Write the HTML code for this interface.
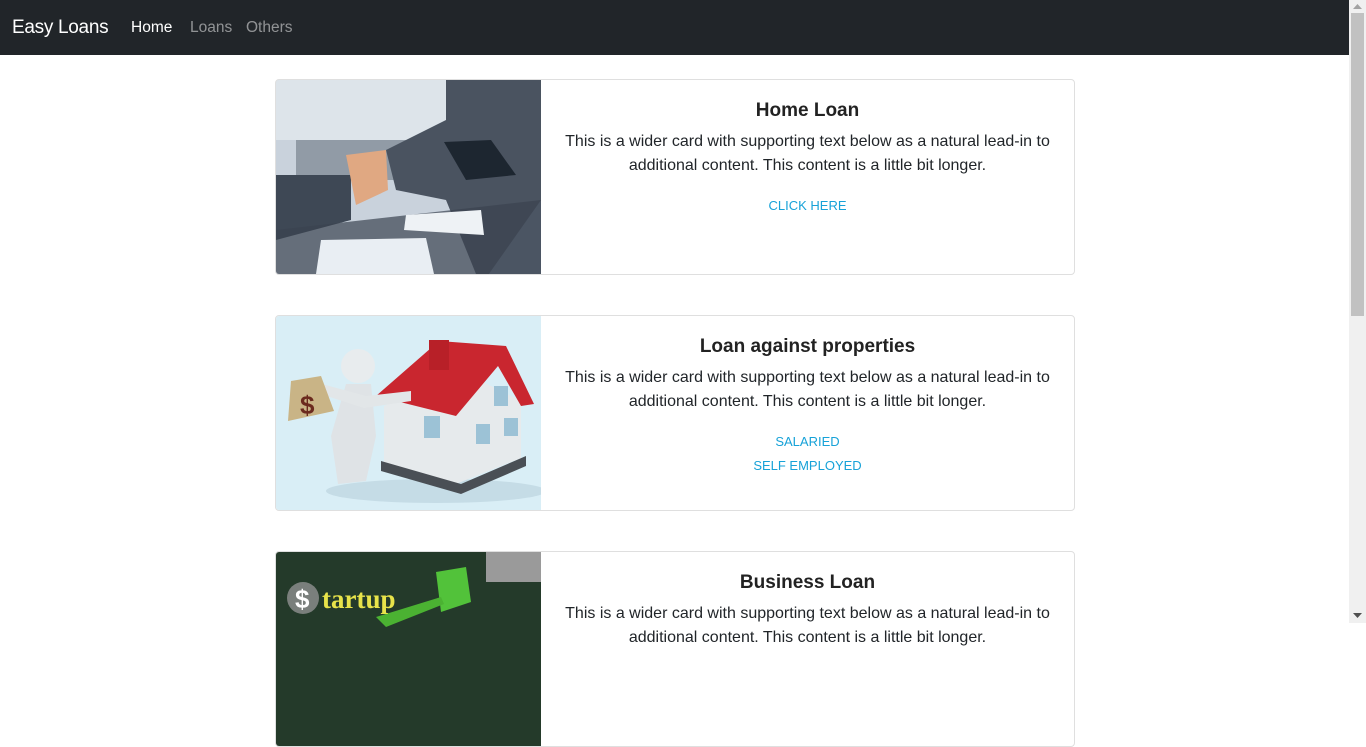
<!DOCTYPE html>
<html><head><meta charset="utf-8"><style>
*{margin:0;padding:0;box-sizing:border-box}
body{width:1366px;height:623px;overflow:hidden;background:#fff;font-family:"Liberation Sans",sans-serif;color:#212529;position:relative}
.nav{position:absolute;left:0;top:0;width:1349px;height:55px;background:#212529}
.brand{position:absolute;left:12px;top:17px;font-size:19px;color:#fff;letter-spacing:-0.3px}
.nl{position:absolute;top:19px;font-size:15.5px;color:rgba(255,255,255,.5)}
.sb{position:absolute;left:1349px;top:0;width:17px;height:623px;background:#f0f0f0}
.thumb{position:absolute;left:2px;top:13px;width:13px;height:303px;background:#c1c1c1}
.card{position:absolute;left:275px;width:800px;height:196px;border:1px solid #dfdfdf;border-radius:4px;overflow:hidden}
.img{position:absolute;left:0;top:0;width:265px;height:194px}
.body{position:absolute;left:265px;top:0;width:533px;padding:0 18px;text-align:center}
h5{font-size:19px;font-weight:bold;margin-top:19px;line-height:24px;color:#222}
p{font-size:16px;line-height:24px;margin-top:7px;color:#212529}
.lk{font-size:13px;color:#17a2d8;line-height:24px}
</style></head><body>
<div class="nav">
<div class="brand">Easy Loans</div>
<div class="nl" style="left:131px;color:#fff">Home</div>
<div class="nl" style="left:190px">Loans</div>
<div class="nl" style="left:246px">Others</div>
</div>
<div class="sb"><div class="thumb"></div>
<svg style="position:absolute;left:4px;top:4px" width="9" height="5"><path d="M0 5L4.5 0L9 5Z" fill="#a3a3a3"/></svg>
<svg style="position:absolute;left:4px;top:613px" width="9" height="5"><path d="M0 0L4.5 5L9 0Z" fill="#505050"/></svg>
</div>

<div class="card" style="top:79px">
<svg class="img" viewBox="0 0 265 194">
<rect width="265" height="194" fill="#c9d2dc"/>
<rect width="265" height="60" fill="#dde4ea"/>
<rect x="20" y="60" width="140" height="40" fill="#5a6470" opacity=".5"/>
<path d="M170 0L265 0L265 194L200 194L170 120L120 110L110 70L170 40Z" fill="#4a5360"/>
<path d="M0 95L75 95L75 140L0 160Z" fill="#3e4855"/>
<path d="M70 75L110 70L112 110L80 125Z" fill="#e0a882"/>
<path d="M0 150L265 120L265 194L0 194Z" fill="#3a4350" opacity=".7"/>
<path d="M130 135L205 130L208 155L128 150Z" fill="#eef2f5"/>
<path d="M45 160L150 158L158 194L40 194Z" fill="#e9eef3"/>
<path d="M168 62L215 60L240 95L190 100Z" fill="#1d2630"/>
<path d="M210 198L265 120L265 194Z" fill="#4b5563"/>
</svg>
<div class="body"><h5>Home Loan</h5>
<p>This is a wider card with supporting text below as a natural lead-in to additional content. This content is a little bit longer.</p>
<div class="lk" style="margin-top:16px">CLICK HERE</div></div>
</div>

<div class="card" style="top:315px">
<svg class="img" viewBox="0 0 265 194">
<rect width="265" height="194" fill="#d9eef6"/>
<ellipse cx="160" cy="175" rx="110" ry="12" fill="#c5dce6"/>
<path d="M108 90L108 155L175 170L245 142L245 85L185 55Z" fill="#e6eaec"/>
<path d="M105 145L185 168L250 140L250 150L185 178L105 155Z" fill="#4a4f55"/>
<path d="M100 80L163 25L230 30L258 88L245 90L222 50L180 100Z" fill="#c9262f"/>
<rect x="153" y="24" width="20" height="30" fill="#b82028"/>
<rect x="148" y="100" width="16" height="22" fill="#9cc2d6"/>
<rect x="200" y="108" width="14" height="20" fill="#9cc2d6"/>
<rect x="228" y="102" width="14" height="18" fill="#9cc2d6"/>
<rect x="218" y="70" width="14" height="20" fill="#9cc2d6"/>
<circle cx="82" cy="50" r="17" fill="#e8ecee"/>
<path d="M70 68L95 68L100 120L90 165L62 168L55 120Z" fill="#dfe3e6"/>
<path d="M35 65L90 80L135 75L135 85L88 92L35 75Z" fill="#e2e6e8"/>
<path d="M15 65L45 60L58 95L12 105Z" fill="#c9b486"/>
<text x="24" y="98" font-size="26" font-weight="bold" fill="#6b2a1e" font-family="Liberation Sans">$</text>
</svg>
<div class="body"><h5>Loan against properties</h5>
<p>This is a wider card with supporting text below as a natural lead-in to additional content. This content is a little bit longer.</p>
<div class="lk" style="margin-top:16px">SALARIED</div>
<div class="lk">SELF EMPLOYED</div></div>
</div>

<div class="card" style="top:551px">
<svg class="img" viewBox="0 0 265 194">
<rect width="265" height="194" fill="#243a2a"/>
<rect x="210" y="0" width="55" height="30" fill="#9a9a9a"/>
<path d="M160 20L190 15L195 50L165 60Z" fill="#52c23a"/>
<path d="M100 65L165 45L168 52L110 75Z" fill="#4bb232"/>
<circle cx="27" cy="46" r="16" fill="#7a7f7c"/>
<text x="19" y="56" font-size="26" font-weight="bold" fill="#fff" font-family="Liberation Sans">$</text>
<text x="46" y="56" font-size="27" font-weight="bold" fill="#e8e34a" font-family="Liberation Serif">tartup</text>
</svg>
<div class="body"><h5>Business Loan</h5>
<p>This is a wider card with supporting text below as a natural lead-in to additional content. This content is a little bit longer.</p></div>
</div>
</body></html>
